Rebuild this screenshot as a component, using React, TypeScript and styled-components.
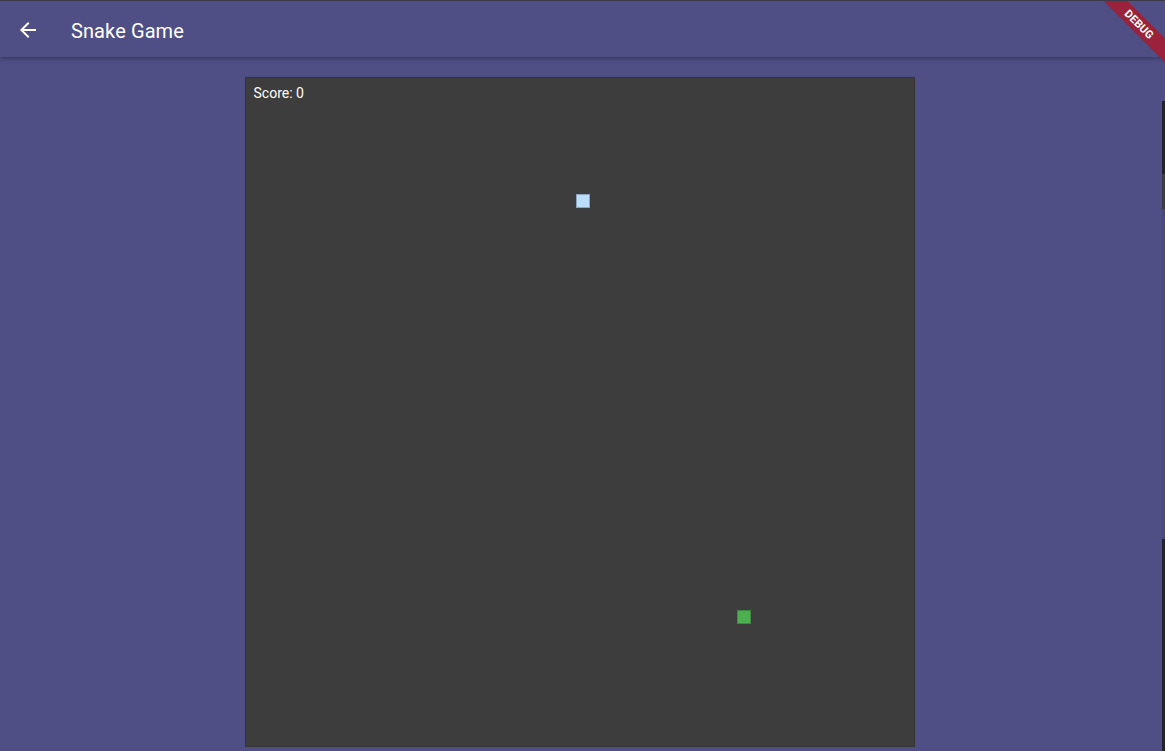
import styled, { createGlobalStyle } from "styled-components";

const GlobalStyle = createGlobalStyle`
  html, body {
    margin: 0;
    padding: 0;
    background: #4f4f86;
    overflow: hidden;
  }
  * {
    box-sizing: border-box;
  }
`;

const Page = styled.div`
  position: relative;
  width: 1165px;
  height: 751px;
  background: #4f4f86;
  border-top: 1px solid #3a3a4a;
  font-family: Roboto, "Liberation Sans", sans-serif;
  display: flex;
  flex-direction: column;
  overflow: hidden;
`;

const AppBar = styled.header`
  height: 56px;
  display: flex;
  align-items: center;
  padding-left: 16px;
  background: #4f4f86;
  box-shadow: 0 2px 4px rgba(0, 0, 0, 0.25);
  position: relative;
  z-index: 1;
`;

const BackButton = styled.button`
  width: 24px;
  height: 24px;
  padding: 0;
  margin: 2px 31px 0 0;
  border: none;
  background: none;
  display: flex;
  align-items: center;
  justify-content: center;
`;

const Title = styled.h1`
  margin: 3px 0 0;
  font-size: 20px;
  font-weight: 400;
  color: #ffffff;
  letter-spacing: 0.1px;
`;

const Body = styled.main`
  flex: 1;
  display: flex;
  justify-content: center;
  padding-top: 20px;
  padding-right: 6px;
`;

const Board = styled.div`
  position: relative;
  width: 670px;
  height: 670px;
  background: #3d3d3d;
  border: 1px solid #353535;
`;

const Score = styled.div`
  padding: 7px 0 0 8px;
  font-size: 14px;
  color: #ffffff;
`;

const Cell = styled.div<{ kind: "food" | "snake" }>`
  position: absolute;
  width: 14px;
  height: 14px;
  background: ${(p) => (p.kind === "food" ? "#bbdefb" : "#4caf50")};
  border: 1px solid ${(p) => (p.kind === "food" ? "#8da6bd" : "#3f8a42")};
`;

const Banner = styled.div`
  position: absolute;
  top: 15px;
  right: -34px;
  width: 120px;
  height: 17px;
  background: rgba(165, 28, 48, 0.88);
  transform: rotate(45deg);
  color: #ffffff;
  font-size: 11px;
  font-weight: 700;
  line-height: 17px;
  text-align: center;
  letter-spacing: 0.2px;
  z-index: 2;
`;

const ScrollEdge = styled.div`
  position: absolute;
  top: 100px;
  right: 0;
  width: 3px;
  height: 651px;
  background: linear-gradient(
    #23232b 0,
    #23232b 73px,
    #3c3c44 73px,
    #3c3c44 108px,
    #4a4a7a 108px,
    #4a4a7a 438px,
    #23232b 438px
  );
  z-index: 2;
`;

const cells: { kind: "food" | "snake"; x: number; y: number }[] = [
  { kind: "food", x: 330, y: 116 },
  { kind: "snake", x: 491, y: 532 },
];

export default function App() {
  return (
    <>
      <GlobalStyle />
      <Page>
        <AppBar>
          <BackButton aria-label="Back">
            <svg width="24" height="24" viewBox="0 0 24 24">
              <path
                d="M20 11H7.83l5.59-5.59L12 4l-8 8 8 8 1.41-1.41L7.83 13H20v-2z"
                fill="#ffffff"
              />
            </svg>
          </BackButton>
          <Title>Snake Game</Title>
        </AppBar>
        <Banner>DEBUG</Banner>
        <ScrollEdge />
        <Body>
          <Board>
            <Score>Score: 0</Score>
            {cells.map((c) => (
              <Cell
                key={c.kind}
                kind={c.kind}
                style={{ left: c.x, top: c.y }}
              />
            ))}
          </Board>
        </Body>
      </Page>
    </>
  );
}
